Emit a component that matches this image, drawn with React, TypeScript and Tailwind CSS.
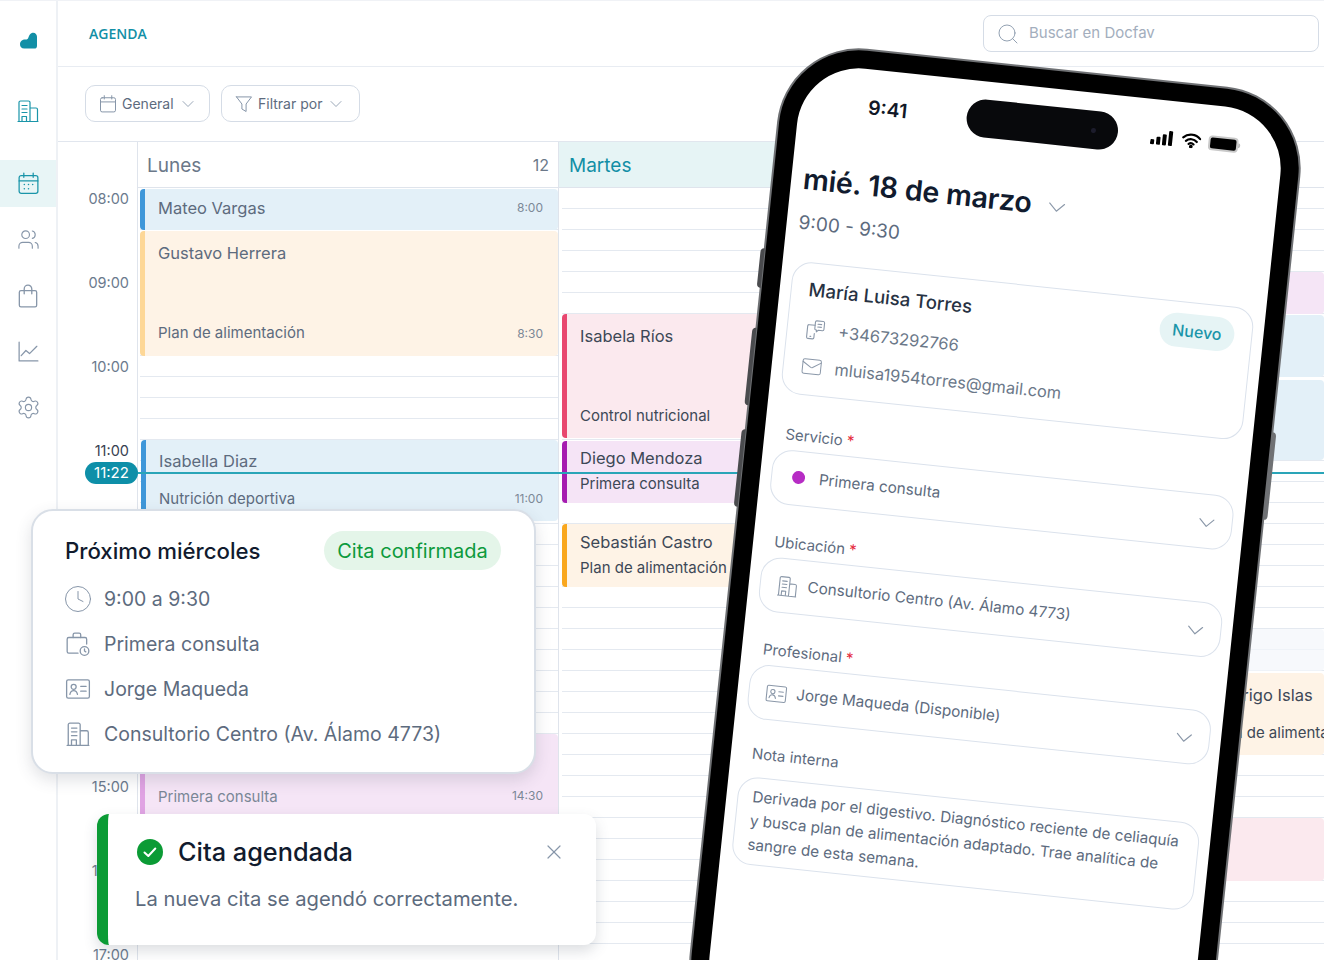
import { ChevronDown, Clock, Mail, Search, Settings, Users, X } from "lucide-react";
import type { ReactNode } from "react";

type IconProps = { className?: string };

const Svg = ({ className, box = 24, children }: IconProps & { box?: number; children: ReactNode }) => (
  <svg viewBox={`0 0 ${box} ${box}`} fill="none" stroke="currentColor" strokeWidth="1.2" strokeLinecap="round" strokeLinejoin="round" className={className}>
    {children}
  </svg>
);

const BuildingIcon = ({ className }: IconProps) => (
  <Svg className={className}>
    <path d="M3 22.500V3.500A1.500 1.500 0 0 1 4.500 2h8A1.500 1.500 0 0 1 14 3.500v19M14 9h6a1.500 1.500 0 0 1 1.500 1.500v12M2 22.500h20" />
    <path d="M6 6.500h5M6 10h5M6 13.500h5M6 22v-4.500h4.500V22" />
  </Svg>
);

const CalendarIcon = ({ className, dots }: IconProps & { dots?: boolean }) => (
  <Svg className={className}>
    <rect x="3" y="4.500" width="18" height="17" rx="2" />
    <path d="M3 9.500h18M7.500 2v4M16.500 2v4" />
    {dots && <path d="M8 13h.01M12 13h.01M16 13h.01M8 17h.01M12 17h.01" strokeWidth="1.500" />}
  </Svg>
);

const BagIcon = ({ className }: IconProps) => (
  <Svg className={className}>
    <path d="M5.500 7h13A1.500 1.500 0 0 1 20 8.500v12a1.500 1.500 0 0 1-1.500 1.500h-13A1.500 1.500 0 0 1 4 20.500v-12A1.500 1.500 0 0 1 5.500 7Z" />
    <path d="M8.500 10V5.500a3.500 3.500 0 0 1 7 0V10" />
  </Svg>
);

const ChartIcon = ({ className }: IconProps) => (
  <Svg className={className}>
    <path d="M3 3v18h18" />
    <path d="M5 16l4.500-5 3.500 3 7-7" />
  </Svg>
);

const FunnelIcon = ({ className }: IconProps) => (
  <Svg className={className}>
    <path d="M3 3.500h18l-6.500 8.500v9l-5-3v-6L3 3.500Z" />
  </Svg>
);

const ContactIcon = ({ className }: IconProps) => (
  <Svg className={className}>
    <rect x="1.500" y="3.500" width="21" height="17" rx="1.500" />
    <circle cx="8" cy="10" r="2.300" />
    <path d="M4.500 17c.5-2.500 2-3.500 3.500-3.500s3 1 3.500 3.500M14.500 9.500h5M14.500 14h5" />
  </Svg>
);

const CaseClockIcon = ({ className }: IconProps) => (
  <Svg className={className}>
    <path d="M12 20.500H3.500A1.500 1.500 0 0 1 2 19V7.500A1.500 1.500 0 0 1 3.500 6h15A1.500 1.500 0 0 1 20 7.500V12" />
    <path d="M7.500 6V3.500A1.500 1.500 0 0 1 9 2h4a1.500 1.500 0 0 1 1.500 1.500V6" />
    <circle cx="18" cy="18.500" r="4" />
    <path d="M18 16.500v2l1.200 .8" />
  </Svg>
);

const PhoneChatIcon = ({ className }: IconProps) => (
  <Svg className={className}>
    <path d="M11 7H4.500A1.500 1.500 0 0 0 3 8.500v12A1.500 1.500 0 0 0 4.500 22h5a1.500 1.500 0 0 0 1.500-1.500V16" />
    <path d="M12.500 2h7A1.500 1.500 0 0 1 21 3.500v7a1.500 1.500 0 0 1-1.500 1.500H15l-2 2v-2h-.5A1.500 1.500 0 0 1 11 10.500v-7A1.500 1.500 0 0 1 12.500 2Z" />
    <path d="M14 5.500h4M14 8.500h4M6.500 19.500h1" />
  </Svg>
);

const LogoIcon = ({ className }: IconProps) => (
  <svg viewBox="0 0 18 17" className={className} fill="#128fa6">
    <path d="M12.500 .5C15.500 -.5 18 1.500 18 4.500V14a3 3 0 0 1-3 3H4.500C1.500 17 0 15 0 12.500 0 9.500 2.500 7.500 5.500 7.500 8 7.500 8.500 6.500 9 5 9.700 3 10.500 1.200 12.500 .5Z" />
  </svg>
);

const navItems = [
  { id: "agenda", icon: <CalendarIcon dots className="size-[25px]" />, active: true },
  { id: "pacientes", icon: <Users className="size-[23px]" strokeWidth={1.2} /> },
  { id: "tienda", icon: <BagIcon className="size-[26px]" /> },
  { id: "informes", icon: <ChartIcon className="size-[25px]" /> },
  { id: "ajustes", icon: <Settings className="size-[25px]" strokeWidth={1.1} /> },
];

type CalEvent = {
  start: number;
  span: number;
  tone: string;
  name?: string;
  sub?: string;
  time?: string;
  extra?: string;
};

const lunes: CalEvent[] = [
  { start: 0, span: 2, tone: "bg-[#e3f0f8] border-[#3f97d9] text-[#5d6b7e]", name: "Mateo Vargas", time: "8:00", extra: "justify-center mt-px pb-[4px]" },
  { start: 2, span: 6, tone: "bg-[#fef3e6] border-[#fdd797] text-[#5d6b7e]", name: "Gustavo Herrera", sub: "Plan de alimentación", time: "8:30", extra: "justify-between mt-px pt-[10px] pb-[11px]" },
  { start: 12, span: 4, tone: "bg-[#e3f0f8] border-[#3f97d9] text-[#5d6b7e]", name: "Isabella Diaz", sub: "Nutrición deportiva", time: "11:00", extra: "justify-between mb-[3px] pt-[9px] pb-[10px] ml-px" },
  { start: 26, span: 4, tone: "bg-[#f5e5f6] border-[#e0a3e3] text-[#7a8796]", sub: "Primera consulta", time: "14:30", extra: "justify-end pb-[9px]" },
];

const martes: CalEvent[] = [
  { start: 6, span: 6, tone: "bg-[#fbe9ee] border-[#e8476f] text-[#3d4856]", name: "Isabela Ríos", sub: "Control nutricional", extra: "justify-between mb-[2px] pt-[10px] pb-[10px]" },
  { start: 12, span: 3, tone: "bg-[#f5e4f6] border-[#a61cb0] text-[#3d4856]", name: "Diego Mendoza", sub: "Primera consulta", extra: "justify-center gap-[2px] mt-px pb-[2px]" },
  { start: 16, span: 3, tone: "bg-[#fef3e6] border-[#f9a71e] text-[#3d4856]", name: "Sebastián Castro", sub: "Plan de alimentación", extra: "justify-center gap-[2px] pb-[2px]" },
];

const tercero: CalEvent[] = [
  { start: 4, span: 2, tone: "bg-[#f5e5f6] border-[#f5e5f6]" },
  { start: 6, span: 3, tone: "bg-[#e3f0f8] border-[#e3f0f8]", extra: "mt-px" },
  { start: 9, span: 4, tone: "bg-[#e3f0f8] border-[#e3f0f8]", extra: "mt-[3px] mb-px" },
  { start: 21, span: 2, tone: "bg-[#f3f7fb]/70 border-transparent" },
  { start: 23, span: 4, tone: "bg-[#fef3e6] border-[#fef3e6] text-[#3d4856]", name: "Rodrigo Islas", sub: "Plan de alimentación", extra: "justify-between mt-[2px] pt-[10px] pb-[10px]" },
  { start: 30, span: 3, tone: "bg-[#fbe9ee] border-[#fbe9ee]" },
];

const hours = [8, 9, 10, 11, 15, 16, 17];
const gridLines = Array.from({ length: 37 }, (_, i) => i);

const GridLines = () => (
  <>
    {gridLines.map((i) => (
      <div key={i} className="col-start-1 border-b border-[#e4e9f0]" style={{ gridRow: i + 1 }} />
    ))}
  </>
);

const EventBlock = ({ ev }: { ev: CalEvent }) => (
  <div
    className={`relative col-start-1 flex flex-col overflow-hidden rounded-[4px] border-l-[5px] pl-[13px] text-[15px] leading-6 whitespace-nowrap ${ev.tone} ${ev.extra ?? ""}`}
    style={{ gridRow: `${ev.start + 1} / span ${ev.span}` }}
  >
    {ev.name && <span className="text-[16.500px]">{ev.name}</span>}
    {ev.sub && <span className="text-[15px]">{ev.sub}</span>}
    {ev.time && <span className="absolute right-[15px] bottom-[14px] text-[12px] leading-4 text-[#7c8897]">{ev.time}</span>}
  </div>
);

const Field = ({ label, className, children }: { label: string; className: string; children: ReactNode }) => (
  <div className={`flex flex-col gap-[3px] ${className}`}>
    <div className="pl-[10px] text-[15px] leading-6 text-[#5d6b7e]">
      {label}
      <span className="ml-1 text-[#e5283a]">*</span>
    </div>
    {children}
  </div>
);

const SelectBox = ({ icon, text }: { icon: ReactNode; text: string }) => (
  <div className="flex h-[55px] items-center rounded-[20px] border border-[#dbe2ec] pr-[11px] text-[15.300px] text-[#5d6b7e]">
    <div className="flex w-[47px] justify-center pl-[6px]">{icon}</div>
    <span className="flex-1 whitespace-nowrap">{text}</span>
    <ChevronDown className="mt-[2px] size-[28px] text-[#8b98a9]" strokeWidth={1} />
  </div>
);

const Phone = () => (
  <div className="absolute left-[732px] top-[65px] h-[1000px] w-[526px] rotate-[6deg] rounded-[82px] border-2 border-[#6f7174] bg-black p-[18px]">
    <div className="absolute -left-[5px] top-[207px] h-[40px] w-[4px] rounded-l bg-[#4a4b4e]" />
    <div className="absolute -left-[5px] top-[287px] h-[78px] w-[4px] rounded-l bg-[#4a4b4e]" />
    <div className="absolute -left-[5px] top-[389px] h-[78px] w-[4px] rounded-l bg-[#4a4b4e]" />
    <div className="absolute -right-[5px] top-[337px] h-[88px] w-[4px] rounded-r bg-[#6f7174]" />
    <div className="relative h-full rounded-[62px] bg-white px-[11px] text-[#1f2937]">
      <div className="absolute left-[168px] top-[18px] flex h-[38px] w-[152px] items-center justify-end rounded-full bg-[#08090c] pr-[22px]">
        <span className="size-[5px] rounded-full bg-[#1c1c2c]" />
      </div>
      <div className="flex h-[77px] items-center justify-between pl-[58px] pr-[32px]">
        <span className="text-[19.500px] font-semibold text-[#111827]">9:41</span>
        <div className="-mt-[2px] flex items-center gap-[7px]">
          <svg viewBox="0 0 24 16" className="h-[16px] w-[24px]" fill="#000">
            <rect x="0" y="10" width="4" height="5" rx="1" />
            <rect x="6" y="7" width="4" height="8" rx="1" />
            <rect x="12" y="4" width="4" height="11" rx="1" />
            <rect x="18" y="0" width="4" height="15" rx="1" />
          </svg>
          <svg viewBox="0 0 20 15" className="h-[15px] w-[20px]" fill="none" stroke="#000" strokeWidth="2.200" strokeLinecap="round">
            <path d="M1.500 5a12 12 0 0 1 17 0M4.500 8.200a8 8 0 0 1 11 0M7.500 11a4 4 0 0 1 5 0" />
            <circle cx="10" cy="13.500" r=".8" fill="#000" />
          </svg>
          <div className="flex items-center">
            <div className="h-[15px] w-[30px] rounded-[4px] border-2 border-[#c9c9c9] bg-black" />
            <div className="h-[5px] w-[2px] rounded-r bg-[#bbb]" />
          </div>
        </div>
      </div>
      <div className="mt-[21px] flex items-center pl-px text-[28.700px] font-semibold leading-9 tracking-[-0.2px] text-[#111b2e]">
        mié. 18 de marzo
        <ChevronDown className="ml-[10px] mt-[4px] size-[30px] text-[#8b98a9]" strokeWidth={0.9} />
      </div>
      <div className="mt-[12px] pl-px text-[19px] leading-7 text-[#5d6b7e]">9:00 - 9:30</div>
      <div className="relative mt-[24px] h-[133px] rounded-[20px] border border-[#dbe2ec] pl-[17px] pt-[14px]">
        <div className="text-[18.600px] font-medium leading-6 text-[#273243]">María Luisa Torres</div>
        <div className="mt-[16px] flex items-center text-[16.500px] leading-6 text-[#6b7889]">
          <PhoneChatIcon className="mr-[12px] size-[22px] text-[#8b98a9]" />
          +34673292766
        </div>
        <div className="mt-[13px] flex items-center text-[16.400px] leading-6 text-[#6b7889]">
          <Mail className="mr-[12px] size-[22px] text-[#8b98a9]" strokeWidth={1.1} />
          mluisa1954torres@gmail.com
        </div>
        <span className="absolute right-[17px] top-[11px] flex h-[34px] w-[75px] items-center justify-center rounded-full bg-[#e6f4f5] text-[16px] font-medium text-[#1a95a9]">
          Nuevo
        </span>
      </div>
      <Field label="Servicio" className="mt-[29px]">
        <SelectBox icon={<span className="-mt-[2px] size-[13px] rounded-full bg-[#b62cc4]" />} text="Primera consulta" />
      </Field>
      <Field label="Ubicación" className="mt-[26px]">
        <SelectBox icon={<BuildingIcon className="size-[22px] text-[#8b98a9]" />} text="Consultorio Centro (Av. Álamo 4773)" />
      </Field>
      <Field label="Profesional" className="mt-[26px]">
        <SelectBox icon={<ContactIcon className="size-[22px] text-[#8b98a9]" />} text="Jorge Maqueda (Disponible)" />
      </Field>
      <div className="mt-[23px] pl-[10px] text-[15px] leading-6 text-[#5d6b7e]">Nota interna</div>
      <div className="mt-[11px] h-[88px] rounded-[20px] border border-[#dbe2ec] px-[14px] pt-[7px] text-[15.300px] leading-[24px] text-[#5d6b7e]">
        Derivada por el digestivo. Diagnóstico reciente de celiaquía y busca plan de alimentación adaptado. Trae analítica de sangre de esta semana.
      </div>
    </div>
  </div>
);

export default function App() {
  return (
    <div className="relative h-[960px] w-[1324px] overflow-hidden bg-white font-['Inter',sans-serif]">
      <div className="flex h-full border-t border-[#f0f2f6]">
        {/* sidebar */}
        <aside className="flex w-[58px] shrink-0 flex-col items-center rounded-tl-[40px] border-r-2 border-[#eef1f5]">
          <LogoIcon className="mt-[31px] size-[17px]" />
          <BuildingIcon className="mt-[50px] size-[24px] text-[#1a95a9]" />
          <nav className="mt-[37px] flex w-full flex-col gap-[9px]">
            {navItems.map((item) => (
              <div key={item.id} className={`flex h-[47px] items-center justify-center ${item.active ? "bg-[#e8f5f6] text-[#1a95a9]" : "text-[#8796a9]"}`}>
                {item.icon}
              </div>
            ))}
          </nav>
        </aside>

        <main className="flex min-w-0 flex-1 flex-col">
          <header className="flex h-[66px] shrink-0 items-center justify-between border-b border-[#e8ecf2] pl-[31px] pr-[5px]">
            <span className="-mt-px font-['Open_Sans',sans-serif] text-[14px] font-semibold text-[#128fa6]">AGENDA</span>
            <div className="flex h-[37px] w-[336px] items-center rounded-lg border border-[#d5dce6] pl-[12px] text-[15px] text-[#a3aebd]">
              <Search className="mr-[9px] size-[24px] text-[#8796a9]" strokeWidth={0.9} />
              Buscar en Docfav
            </div>
          </header>

          <div className="flex h-[75px] shrink-0 items-center gap-[11px] border-b border-[#e1e6ee] pl-[27px] pb-px text-[14px] text-[#5d6b7e]">
            <button className="flex h-[37px] w-[125px] items-center rounded-[10px] border border-[#d5dce6] pl-[12px]">
              <CalendarIcon className="mr-[4px] size-[20px] text-[#8796a9]" />
              General
              <ChevronDown className="ml-[4px] size-[20px] text-[#8796a9]" strokeWidth={1} />
            </button>
            <button className="flex h-[37px] w-[139px] items-center rounded-[10px] border border-[#d5dce6] pl-[12px]">
              <FunnelIcon className="mr-[4px] size-[20px] text-[#8796a9]" />
              Filtrar por
              <ChevronDown className="ml-[4px] size-[20px] text-[#8796a9]" strokeWidth={1} />
            </button>
          </div>

          <section className="flex min-h-0 flex-1">
            {/* horas */}
            <div className="w-[79px] shrink-0 pt-[46px]">
              <div className="grid auto-rows-[21px]">
                {hours.map((h) => (
                  <div
                    key={h}
                    className={`pr-[8px] text-right text-[14.500px] leading-[21px] ${h === 11 ? "text-[#374151]" : "text-[#6b7a8d]"}`}
                    style={{ gridRow: (h - 8) * 4 + 1 }}
                  >
                    {String(h).padStart(2, "0")}:00
                  </div>
                ))}
              </div>
            </div>

            {/* lunes */}
            <div className="w-[421px] shrink-0 border-l border-[#dfe4ec]">
              <div className="flex h-[46px] items-center justify-between border-b border-[#dfe4ec] pl-[9px] pr-[9px] text-[#6b7889]">
                <span className="pt-[3px] text-[19px]">Lunes</span>
                <span className="text-[16px]">12</span>
              </div>
              <div className="grid auto-rows-[21px] pl-[2px]">
                <GridLines />
                {lunes.map((ev) => (
                  <EventBlock key={ev.start} ev={ev} />
                ))}
              </div>
            </div>

            {/* martes */}
            <div className="w-[636px] shrink-0 border-l border-[#dfe4ec]">
              <div className="flex h-[46px] items-center border-b border-[#dfe4ec] bg-[#e6f4f5] pl-[10px] pt-[3px] text-[19px] text-[#128fa6]">
                Martes
              </div>
              <div className="grid auto-rows-[21px] pl-[3px]">
                <GridLines />
                {martes.map((ev) => (
                  <EventBlock key={ev.start} ev={ev} />
                ))}
              </div>
            </div>

            {/* tercera columna */}
            <div className="min-w-0 flex-1 overflow-hidden">
              <div className="h-[46px] border-b border-[#dfe4ec]" />
              <div className="grid auto-rows-[21px]">
                <GridLines />
                {tercero.map((ev) => (
                  <EventBlock key={ev.start} ev={ev} />
                ))}
              </div>
            </div>
          </section>
        </main>
      </div>

      {/* hora actual */}
      <div className="absolute left-[138px] right-0 top-[472px] h-[2px] bg-[#2aa5b8]" />
      <div className="absolute left-[85px] top-[462px] flex h-[22px] w-[53px] items-center justify-center rounded-full bg-[#0e8fa8] text-[15px] text-white">
        11:22
      </div>

      <Phone />

      {/* detalle de la cita */}
      <div className="absolute left-[31px] top-[509px] h-[265px] w-[505px] rounded-[22px] border-2 border-[#d9dfe7] bg-white pl-[32px] pr-[33px] pt-[20px] shadow-[0_6px_16px_rgba(60,70,90,0.16)]">
        <div className="flex items-center justify-between">
          <span className="pt-px text-[22.200px] font-medium text-[#111b2e]">Próximo miércoles</span>
          <span className="flex h-[39px] w-[177px] items-center justify-center rounded-full bg-[#e4f5e9] text-[20px] text-[#0c9a3c]">Cita confirmada</span>
        </div>
        <div className="mt-[14px] flex flex-col gap-[15px] text-[19.500px] leading-[30px] text-[#5d6b7e]">
          <div className="flex items-center gap-[13px]">
            <Clock className="-mx-[2px] size-[30px] text-[#8796a9]" strokeWidth={0.8} />
            9:00 a 9:30
          </div>
          <div className="flex items-center gap-[13px]">
            <CaseClockIcon className="size-[26px] text-[#8796a9]" />
            Primera consulta
          </div>
          <div className="flex items-center gap-[13px]">
            <ContactIcon className="size-[26px] text-[#8796a9]" />
            Jorge Maqueda
          </div>
          <div className="flex items-center gap-[13px]">
            <BuildingIcon className="size-[26px] text-[#8796a9]" />
            Consultorio Centro (Av. Álamo 4773)
          </div>
        </div>
      </div>

      {/* aviso */}
      <div className="absolute left-[97px] top-[814px] h-[131px] w-[499px] overflow-hidden rounded-xl border-l-[11px] border-[#0b9b35] bg-white pl-[27px] pr-[30px] pt-[20px] shadow-[0_6px_14px_rgba(60,70,90,0.18)]">
        <div className="flex items-center pl-[2px]">
          <svg viewBox="0 0 26 26" className="mr-[15px] size-[26px]">
            <circle cx="13" cy="13" r="13" fill="#0b9b35" />
            <path d="M7.500 13.500l3.800 3.500 7-7.500" fill="none" stroke="#fff" strokeWidth="2" strokeLinecap="round" strokeLinejoin="round" />
          </svg>
          <span className="flex-1 text-[25.300px] font-medium leading-9 text-[#111b2e]">Cita agendada</span>
          <X className="size-[24px] text-[#8796a9]" strokeWidth={1.2} />
        </div>
        <div className="mt-[15px] text-[20.200px] leading-7 text-[#5d6b7e]">La nueva cita se agendó correctamente.</div>
      </div>
    </div>
  );
}
